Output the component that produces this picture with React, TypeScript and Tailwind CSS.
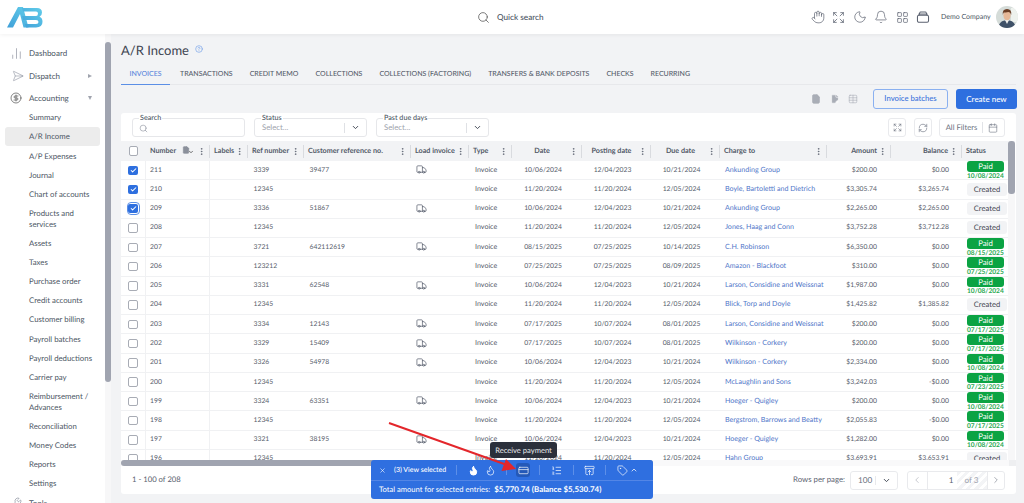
import React from "react";
import { Hand, Expand, Moon, Bell, LayoutGrid, Search, ChartNoAxesColumn, Send, CircleDollarSign, Truck, RefreshCw, Calendar, ChevronDown, ChevronLeft, ChevronRight, ChevronUp, EllipsisVertical, File, FilePlus2, Table, X, Flame, CreditCard, ListOrdered, ArchiveRestore, Tag, Wrench, Check, CircleHelp } from "lucide-react";

const COLS = "grid grid-cols-[25px_64px_38px_56px_107px_58px_43px_70px_69px_69px_107px_64px_71px_46px]";

type Row = { n: string; r: string; c?: string; t?: boolean; d: string; p: string; u: string; to: string; a: string; b: string; s?: string; ck?: number };
const OLD = { d: "10/06/2024", p: "12/04/2023", u: "10/21/2024" };
const NEW = { d: "11/20/2024", p: "11/20/2024", u: "12/05/2024" };
const J = { d: "07/17/2025", p: "10/07/2024", u: "08/01/2025" };
const rows: Row[] = [
  { n: "211", r: "3339", c: "39477", t: true, ...OLD, to: "Ankunding Group", a: "$200.00", b: "$0.00", s: "10/08/2024", ck: 1 },
  { n: "210", r: "12345", ...NEW, to: "Boyle, Bartoletti and Dietrich", a: "$3,305.74", b: "$3,265.74", ck: 1 },
  { n: "209", r: "3336", c: "51867", t: true, ...OLD, to: "Ankunding Group", a: "$2,265.00", b: "$2,265.00", ck: 2 },
  { n: "208", r: "12345", ...NEW, to: "Jones, Haag and Conn", a: "$3,752.28", b: "$3,712.28" },
  { n: "207", r: "3721", c: "642112619", t: true, d: "08/15/2025", p: "07/25/2025", u: "10/14/2025", to: "C.H. Robinson", a: "$6,350.00", b: "$0.00", s: "08/15/2025" },
  { n: "206", r: "123212", d: "07/25/2025", p: "07/25/2025", u: "08/09/2025", to: "Amazon - Blackfoot", a: "$310.00", b: "$0.00", s: "07/25/2025" },
  { n: "205", r: "3331", c: "62548", t: true, ...OLD, to: "Larson, Considine and Weissnat", a: "$1,987.00", b: "$0.00", s: "10/08/2024" },
  { n: "204", r: "12345", ...NEW, to: "Blick, Torp and Doyle", a: "$1,425.82", b: "$1,385.82" },
  { n: "203", r: "3334", c: "12143", t: true, ...J, to: "Larson, Considine and Weissnat", a: "$200.00", b: "$0.00", s: "07/17/2025" },
  { n: "202", r: "3329", c: "15409", t: true, ...J, to: "Wilkinson - Corkery", a: "$200.00", b: "$0.00", s: "07/17/2025" },
  { n: "201", r: "3326", c: "54978", t: true, ...OLD, to: "Wilkinson - Corkery", a: "$2,334.00", b: "$0.00", s: "10/08/2024" },
  { n: "200", r: "12345", ...NEW, to: "McLaughlin and Sons", a: "$3,242.03", b: "-$0.00", s: "07/23/2025" },
  { n: "199", r: "3324", c: "63351", t: true, ...OLD, to: "Hoeger - Quigley", a: "$200.00", b: "$0.00", s: "10/08/2024" },
  { n: "198", r: "12345", ...NEW, to: "Bergstrom, Barrows and Beatty", a: "$2,055.83", b: "-$0.00", s: "07/17/2025" },
  { n: "197", r: "3321", c: "38195", t: true, ...OLD, to: "Hoeger - Quigley", a: "$1,282.00", b: "$0.00", s: "10/08/2024" },
  { n: "196", r: "12345", ...NEW, to: "Hahn Group", a: "$3,693.91", b: "$3,653.91" },
];

function Logo() {
  return (
    <svg width="36" height="23" viewBox="0 0 36 23" className="ml-[7px]">
      <defs>
        <linearGradient id="lg" x1="0" y1="1" x2="1" y2="0">
          <stop offset="0" stopColor="#3f9fd8" />
          <stop offset="1" stopColor="#62cdea" />
        </linearGradient>
      </defs>
      <path d="M0 21.5 L11 1 H16 L21.5 21.5 H16.5 L13 8 L6 21.5 Z" fill="url(#lg)" />
      <path d="M15 2 H30 Q35 2 35 6.5 Q35 9.5 32.5 10.8 Q35.5 12 35.5 15.8 Q35.5 21.5 29 21.5 H19 L18 18 H29 Q31.5 18 31.5 16 Q31.5 14 29 14 H16 L15.3 10 H29 Q31 10 31 7.5 Q31 5.5 29 5.5 H16 Z" fill="url(#lg)" />
    </svg>
  );
}

function Avatar() {
  return (
    <svg width="22" height="22" viewBox="0 0 22 22" className="rounded-full">
      <rect width="22" height="22" fill="#d5dcd9" />
      <rect x="15" y="2" width="7" height="14" fill="#eef2ee" />
      <path d="M2 22 Q3 15.5 8.5 14.5 L13.5 14.5 Q19 15.5 20 22 Z" fill="#3f5168" />
      <path d="M9 14 L11 18 L13 14 Z" fill="#f0f0ee" />
      <ellipse cx="11" cy="9.5" rx="3.6" ry="4.8" fill="#e6b898" />
      <path d="M6.8 9 Q6 3 11 3 Q16 3 15.2 9 Q14.5 6 12.5 6 Q9 6.5 7.8 6.5 Q7 7.5 6.8 9 Z" fill="#6b3e26" />
    </svg>
  );
}

function Stack({ size = 16, className = "" }: { size?: number; className?: string }) {
  return (
    <svg width={size} height={size} viewBox="0 0 24 24" fill="none" stroke="currentColor" strokeWidth="1.8" className={className}>
      <rect x="2.5" y="9" width="19" height="12" rx="2.5" />
      <path d="M5 9 L6.5 4.5 Q6.8 3.5 8 3.5 H16 Q17.2 3.5 17.5 4.5 L19 9" />
      <path d="M4.5 7 H19.5" />
    </svg>
  );
}

function Top() {
  return (
    <header className="relative z-10 h-[34px] shrink-0 bg-white shadow-[0_1px_4px_rgba(0,0,0,0.06)] flex items-center">
      <div className="w-[477px]"><Logo /></div>
      <Search size={13} strokeWidth={1.4} className="text-[#555]" />
      <span className="ml-[7px] text-[8.2px] text-[#4b5563] font-medium">Quick search</span>
      <div className="ml-auto flex items-center text-[#5b6270]">
        <Hand size={14} strokeWidth={1.2} />
        <Expand size={13} strokeWidth={1.4} className="ml-[7.5px]" />
        <Moon size={14} strokeWidth={1.2} className="ml-[7.5px]" />
        <Bell size={14} strokeWidth={1.2} className="ml-[7.5px]" />
        <LayoutGrid size={13} strokeWidth={1.3} className="ml-[7.5px]" />
        <Stack size={14} className="ml-[7.5px]" />
        <span className="ml-[11px] w-[50px] whitespace-nowrap text-[7px] text-[#4b5563]">Demo Company</span>
        <span className="ml-[5px] mr-[6px] flex"><Avatar /></span>
      </div>
    </header>
  );
}

function TopItem({ icon, label, caret, h }: { icon: React.ReactNode; label: string; caret?: "r" | "d"; h: string }) {
  return (
    <div className={`${h} flex items-center pl-[10px] pr-[13px] text-[#4b5563]`}>
      <span className="w-[19px] flex text-[#7b8190]">{icon}</span>
      <span className="text-[8px]">{label}</span>
      {caret === "r" && <span className="ml-auto w-0 h-0 border-y-[2.5px] border-y-transparent border-l-[4px] border-l-[#a0a4ae]" />}
      {caret === "d" && <span className="ml-auto w-0 h-0 border-x-[2.5px] border-x-transparent border-t-[4px] border-t-[#a0a4ae]" />}
    </div>
  );
}

function Sub({ children, active, tall }: { children: React.ReactNode; active?: boolean; tall?: boolean }) {
  return (
    <div className={`${tall ? "h-[29.5px]" : "h-[19.2px]"} mx-[5px] pl-[24px] flex items-center text-[7.8px] leading-[10.8px] text-[#4b5563] rounded-[3px] ${active ? "bg-[#ececec]" : ""}`}>
      <span>{children}</span>
    </div>
  );
}

function Sidebar() {
  return (
    <aside className="w-[111px] shrink-0 flex bg-white overflow-hidden">
      <nav className="w-[105px] pt-[7px] shrink-0">
        <TopItem h="h-[24px]" icon={<ChartNoAxesColumn size={13} strokeWidth={1.1} />} label="Dashboard" />
        <TopItem h="h-[22px]" icon={<Send size={12} strokeWidth={1} className="rotate-45" />} label="Dispatch" caret="r" />
        <TopItem h="h-[21px]" icon={<CircleDollarSign size={12} strokeWidth={1.3} className="text-[#444]" />} label="Accounting" caret="d" />
        <Sub>Summary</Sub>
        <Sub active>A/R Income</Sub>
        <Sub>A/P Expenses</Sub>
        <Sub>Journal</Sub>
        <Sub>Chart of accounts</Sub>
        <Sub tall>Products and<br />services</Sub>
        <Sub>Assets</Sub>
        <Sub>Taxes</Sub>
        <Sub>Purchase order</Sub>
        <Sub>Credit accounts</Sub>
        <Sub>Customer billing</Sub>
        <Sub>Payroll batches</Sub>
        <Sub>Payroll deductions</Sub>
        <Sub>Carrier pay</Sub>
        <Sub tall>Reimbursement /<br />Advances</Sub>
        <Sub>Reconciliation</Sub>
        <Sub>Money Codes</Sub>
        <Sub>Reports</Sub>
        <Sub>Settings</Sub>
        <TopItem h="h-[20px]" icon={<Wrench size={12} strokeWidth={1.2} />} label="Tools" />
      </nav>
      <div className="w-[6px] bg-[#f7f7f8] pt-[8px]">
        <div className="h-[340px] rounded-[3px] bg-[#a0a4b0]" />
      </div>
    </aside>
  );
}

const TABS = ["TRANSACTIONS", "CREDIT MEMO", "COLLECTIONS", "COLLECTIONS (FACTORING)", "TRANSFERS & BANK DEPOSITS", "CHECKS", "RECURRING"];

function Tabs() {
  return (
    <div className="mt-[7px] h-[20px] flex border-b border-[#e7e8eb] text-[7px] text-[#565d6b] font-medium">
      <div className="w-[49px] text-center text-[#5b86dc] border-b border-[#5b8fe6] h-[20px] leading-[18px]">INVOICES</div>
      <div className="flex gap-[17px] pl-[10px] leading-[18px]">
        {TABS.map((t) => <span key={t}>{t}</span>)}
      </div>
    </div>
  );
}

function Field({ label, w, search }: { label: string; w: string; search?: boolean }) {
  return (
    <div className={`relative ${w} h-[18.5px] rounded-[3px] border border-[#e6e7ea] bg-white flex items-center pl-[7px] text-[7.8px] text-[#9ca1ac]`}>
      <span className="absolute -top-[5px] left-[6px] px-[1px] bg-white text-[7.2px] leading-[8px] text-[#4b5563] font-medium">{label}</span>
      {search ? <Search size={9} strokeWidth={1.4} className="-ml-[1px] mt-[1px] text-[#7b8190]" /> : <span className="mt-[1px]">Select...</span>}
      {!search && (
        <>
          <span className="ml-auto h-[10px] w-px bg-[#dfe1e5]" />
          <ChevronDown size={9} strokeWidth={2.6} className="mx-[6px] text-[#444b57]" />
        </>
      )}
    </div>
  );
}

function Box({ children, className = "" }: { children: React.ReactNode; className?: string }) {
  return <div className={`h-[19px] rounded-[3px] border border-[#e9eaed] bg-white flex items-center justify-center text-[#6b7280] ${className}`}>{children}</div>;
}

function Head({ label, right, center, extra, last }: { label: string; right?: boolean; center?: boolean; extra?: React.ReactNode; last?: boolean }) {
  return (
    <div className="h-full flex items-center pl-[4px] text-[7.2px] font-bold text-[#535a68] bg-[#f2f3f5]">
      <div className={`flex-1 flex items-center min-w-0 whitespace-nowrap ${right ? "justify-end" : center ? "justify-center" : ""}`}>
        <span>{label}</span>
        {extra}
      </div>
      {!last && (
        <>
          <EllipsisVertical size={9} strokeWidth={1.8} className="shrink-0 ml-[1px] text-[#535a68]" />
          <span className="shrink-0 ml-[2.5px] w-[1.5px] h-[13px] bg-[#d9dbdf]" />
        </>
      )}
    </div>
  );
}

function Box2({ state }: { state?: number }) {
  if (!state) return <span className="block w-[9.5px] h-[9.5px] rounded-[2px] border border-[#a8acb5] bg-white" />;
  const inner = (
    <span className="flex w-[9.5px] h-[9.5px] rounded-[2px] bg-[#2e6fdf] items-center justify-center">
      <Check size={7} strokeWidth={3.5} className="text-white" />
    </span>
  );
  if (state === 2) return <span className="flex w-[13px] h-[13px] rounded-[4px] border-[1.5px] border-[#5b8fe6] items-center justify-center">{inner}</span>;
  return inner;
}

function TableRow({ r }: { r: Row }) {
  const base = "flex items-center min-w-0 whitespace-nowrap pb-[1px] leading-[10px]";
  const num = "text-[6.8px]";
  return (
    <div className={`${COLS} h-[19.25px] border-b border-[#f0f1f3] text-[7.1px] text-[#565c6a]`}>
      <div className="flex items-center justify-center border-r border-[#f0f1f3]"><Box2 state={r.ck} /></div>
      <div className={`${base} ${num} pl-[4px] border-r border-[#f0f1f3]`}>{r.n}</div>
      <div />
      <div className={`${base} ${num} pl-[5.5px]`}>{r.r}</div>
      <div className={`${base} ${num} pl-[5.5px]`}>{r.c}</div>
      <div className={`${base} pl-[5px]`}>{r.t && <Truck size={11} strokeWidth={1.6} className="text-[#5b6270]" />}</div>
      <div className={`${base} pl-[6px]`}>Invoice</div>
      <div className={`${base} ${num} justify-center pr-[8px]`}>{r.d}</div>
      <div className={`${base} ${num} justify-center pr-[8px]`}>{r.p}</div>
      <div className={`${base} ${num} justify-center pr-[8px]`}>{r.u}</div>
      <div className={`${base} pl-[5px] text-[#4f76c9]`}>{r.to}</div>
      <div className={`${base} ${num} justify-end pr-[14px]`}>{r.a}</div>
      <div className={`${base} ${num} justify-end pr-[13px]`}>{r.b}</div>
      <div className="flex flex-col justify-center pl-[5px]">
        {r.s ? (
          <>
            <span className="w-[37px] h-[10.5px] rounded-[3px] bg-[#0ba343] text-white text-center text-[7.8px] leading-[10.5px]">Paid</span>
            <span className="text-[6.6px] leading-[8px] font-bold text-[#27a84f]">{r.s}</span>
          </>
        ) : (
          <span className="w-[40px] h-[13px] rounded-[3px] bg-[#f2f3f5] text-[#3f4550] text-center text-[7.6px] leading-[13px]">Created</span>
        )}
      </div>
    </div>
  );
}

function DataTable() {
  return (
    <div className="h-[319px] flex overflow-hidden">
      <div className="w-[887px] shrink-0">
        <div className={`${COLS} h-[20px]`}>
          <div className="flex items-center justify-center bg-[#f2f3f5]"><Box2 /></div>
          <Head label="Number" extra={<span className="flex ml-[6px] relative"><File size={8} fill="#8b909b" stroke="#8b909b" /><ChevronDown size={6} strokeWidth={3} className="-ml-[2px] mt-[3px] text-[#444]" /></span>} />
          <Head label="Labels" />
          <Head label="Ref number" />
          <Head label="Customer reference no." />
          <Head label="Load invoice" />
          <Head label="Type" />
          <Head label="Date" center />
          <Head label="Posting date" center />
          <Head label="Due date" center />
          <Head label="Charge to" />
          <Head label="Amount" right />
          <Head label="Balance" right />
          <Head label="Status" last />
        </div>
        {rows.map((r) => <TableRow key={r.n} r={r} />)}
      </div>
      <div className="w-[7px] bg-[#f7f7f8]">
        <div className="h-[53px] rounded-[3px] bg-[#a0a4b0]" />
      </div>
    </div>
  );
}

function Card() {
  return (
    <section className="h-[381px] rounded-[3px] bg-white overflow-hidden flex flex-col">
      <div className="h-[28px] shrink-0 flex items-center pl-[11px] pr-[11px] pt-[1px] gap-[9px]">
        <Field label="Search" w="w-[113px]" search />
        <Field label="Status" w="w-[113px]" />
        <Field label="Past due days" w="w-[113px]" />
        <Box className="ml-auto w-[18px]"><Expand size={9} strokeWidth={1.6} /></Box>
        <Box className="ml-[-1px] w-[18px]"><RefreshCw size={10} strokeWidth={1.5} /></Box>
        <Box className="ml-[-2px] w-[66px] text-[7.7px] gap-[5px]">
          <span>All Filters</span>
          <span className="h-[11px] w-px bg-[#e1e3e7]" />
          <Calendar size={10} strokeWidth={1.4} />
        </Box>
      </div>
      <DataTable />
      <div className="h-[6px] shrink-0 flex bg-[#f9f9fa]">
        <div className="w-[532px] h-[6px] rounded-[3px] bg-[#a0a4b0]" />
        <div className="ml-auto w-[7px] bg-[#eeeff1]" />
      </div>
      <div className="flex-1 flex items-center pl-[11px] pr-[11px] text-[7.7px] text-[#5b6270]">
        <span>1 - 100 of 208</span>
        <span className="ml-auto text-[7.8px]">Rows per page:</span>
        <Box className="ml-[5px] w-[48px] !justify-start pl-[7px] text-[8.2px]">
          <span>100</span>
          <span className="ml-auto h-[9px] w-px bg-[#e8e9ec]" />
          <ChevronDown size={9} strokeWidth={2.6} className="mx-[6px] text-[#444b57]" />
        </Box>
        <div className="ml-[9px] h-[19px] w-[98px] rounded-[3px] border border-[#e9eaed] flex items-center text-[8.2px]">
          <span className="w-[19.5px] h-full flex items-center justify-center border-r border-[#e9eaed]"><ChevronLeft size={10} strokeWidth={1.4} className="text-[#a0a4ae]" /></span>
          <span className="w-[29px] pr-[3px] text-right">1</span>
          <span className="h-full w-[30px] flex items-center justify-center text-[#9ca1ac] bg-[repeating-linear-gradient(135deg,#f3f4f6_0,#f3f4f6_3px,#ffffff_3px,#ffffff_6px)]">of 3</span>
          <span className="flex-1 h-full flex items-center justify-center border-l border-[#e9eaed]"><ChevronRight size={10} strokeWidth={1.4} className="text-[#6b7280]" /></span>
        </div>
      </div>
    </section>
  );
}

function Main() {
  return (
    <main className="flex-1 min-w-0 pl-[10px] pr-[8px]">
      <div className="h-[24px] pt-[8px] flex items-start">
        <h1 className="text-[13px] leading-[17px] text-[#3f4652]">A/R Income</h1>
        <CircleHelp size={8} strokeWidth={1.6} className="ml-[6px] mt-[3px] text-[#5b8fe6]" />
      </div>
      <Tabs />
      <div className="h-[28px] flex items-center pr-0 -mr-[1px]">
        <File size={10} fill="#a9adb6" stroke="#a9adb6" className="ml-auto" />
        <FilePlus2 size={10} fill="#a9adb6" stroke="#ffffff" strokeWidth={1.4} className="ml-[9px]" />
        <Table size={10} strokeWidth={1.4} className="ml-[8px] text-[#a9adb6]" />
        <button className="ml-[15px] w-[75px] h-[20px] rounded-[3px] border border-[#8ab0f0] text-[7.7px] font-medium text-[#3d74dc]">Invoice batches</button>
        <button className="ml-[8px] w-[61px] h-[20px] rounded-[3px] bg-[#2e6fdf] text-[8px] font-medium text-white">Create new</button>
      </div>
      <Card />
    </main>
  );
}

function Div() {
  return <span className="block h-[10px] w-px bg-[#5d8fe8]" />;
}

function Overlay() {
  return (
    <>
      <div className="absolute left-[371px] top-[460px] w-[282px] h-[39px] rounded-[3px] bg-[#2f6fe0] text-white flex flex-col">
        <div className="h-[21px] flex items-center border-b border-[#5386e6]">
          <X size={7} strokeWidth={2} className="ml-[8px]" />
          <span className="ml-[8px] w-[62px] text-[7px] font-medium whitespace-nowrap">(3) View selected</span>
          <Div />
          <Flame size={11} strokeWidth={2} fill="#ffffff" className="ml-[11px]" />
          <Flame size={11} strokeWidth={1.5} className="ml-[6px]" />
          <span className="ml-[10px]"><Div /></span>
          <span className="ml-[9px] w-[14px] h-[14px] rounded-[3px] bg-[#2459b8] flex items-center justify-center"><CreditCard size={11} strokeWidth={1.5} /></span>
          <span className="ml-[9px]"><Div /></span>
          <ListOrdered size={11} strokeWidth={1.5} className="ml-[11px]" />
          <span className="ml-[11px]"><Div /></span>
          <ArchiveRestore size={11} strokeWidth={1.5} className="ml-[10px]" />
          <span className="ml-[10px]"><Div /></span>
          <Tag size={11} strokeWidth={1.5} className="ml-[11px]" />
          <ChevronUp size={8} strokeWidth={2.2} className="ml-[2px]" />
        </div>
        <div className="flex-1 flex items-center pl-[8px] text-[7.6px] whitespace-nowrap">
          <span>Total amount for selected entries:</span>
          <span className="ml-[4px] font-bold text-[7.9px]">$5,770.74 (Balance $5,530.74)</span>
        </div>
      </div>
      <div className="absolute left-[490px] top-[441.5px] w-[67px] h-[16px] rounded-[3px] bg-[#2b303b] text-[#e8e9ec] text-[7.6px] leading-[16px] text-center">Receive payment</div>
      <svg className="absolute left-[385px] top-[418px]" width="140" height="58" viewBox="0 0 140 58">
        <path d="M4 5 L122 47" stroke="#e3262b" strokeWidth="2" fill="none" />
        <path d="M131 51 L116.5 53 L121 41 Z" fill="#e3262b" />
      </svg>
    </>
  );
}

export default function App() {
  return (
    <div className="relative w-[1024px] h-[503px] overflow-hidden bg-[#f2f3f5] flex flex-col antialiased [font-family:Lato,sans-serif] [text-rendering:geometricPrecision]">
      <Top />
      <div className="flex-1 min-h-0 flex">
        <Sidebar />
        <Main />
      </div>
      <Overlay />
    </div>
  );
}
